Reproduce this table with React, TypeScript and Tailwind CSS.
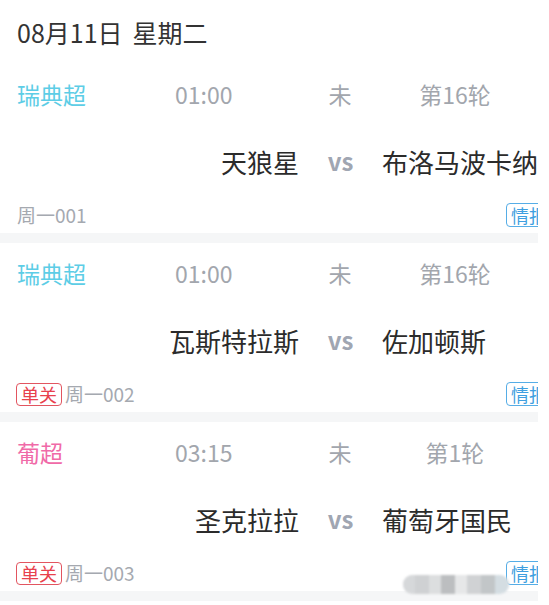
import React from "react";

type Match = {
  league: string;
  leagueColor: string;
  time: string;
  status: string;
  round: string;
  home: string;
  away: string;
  code: string;
  single: boolean;
};

const matches: Match[] = [
  { league: "瑞典超", leagueColor: "text-[#5dcde6]", time: "01:00", status: "未", round: "第16轮", home: "天狼星", away: "布洛马波卡纳", code: "周一001", single: false },
  { league: "瑞典超", leagueColor: "text-[#5dcde6]", time: "01:00", status: "未", round: "第16轮", home: "瓦斯特拉斯", away: "佐加顿斯", code: "周一002", single: true },
  { league: "葡超", leagueColor: "text-[#f06aa8]", time: "03:15", status: "未", round: "第1轮", home: "圣克拉拉", away: "葡萄牙国民", code: "周一003", single: true },
];

function MatchCard({ m }: { m: Match }) {
  return (
    <div>
      <div className="h-[169px] flex flex-col">
        <div className="h-[61px] flex items-center pl-[17px] text-[23px]">
          <div className={`w-[158px] ${m.leagueColor}`}>{m.league}</div>
          <div className="w-[130px] text-[#a2a6ad]">{m.time}</div>
          <div className="w-[70px] text-center text-[#a2a6ad]">{m.status}</div>
          <div className="w-[160px] text-center text-[#a2a6ad]">{m.round}</div>
        </div>
        <div className="h-[72px] flex items-center text-[26px] text-[#2b2b2b]">
          <div className="w-[299px] text-right whitespace-nowrap">{m.home}</div>
          <div className="w-[83px] text-center text-[24px] font-semibold text-[#a0a6b2]">vs</div>
          <div className="flex-1 whitespace-nowrap overflow-hidden">{m.away}</div>
        </div>
        <div className="h-[36px] flex items-center pl-[16px] text-[19px]">
          {m.single && (
            <span className="mr-[2px] px-[4px] h-[23px] leading-[21px] border border-[#e25560] text-[#e8414d] rounded-[4px] text-[18px]">
              单关
            </span>
          )}
          <span className="text-[#a5a9b0] pl-[1px]">{m.code}</span>
          <span className="ml-auto mr-[-14px] px-[4px] h-[24px] leading-[22px] border border-[#56ade6] text-[#3f9fe0] rounded-[4px] text-[18px] whitespace-nowrap">
            情报
          </span>
        </div>
      </div>
      <div className="h-[10px] bg-[#f5f6f7]" />
    </div>
  );
}

export default function App() {
  return (
    <div className="min-h-screen bg-white" style={{ fontFamily: '"Noto Sans CJK SC", "Noto Sans", sans-serif' }}>
      <div className="relative w-[538px] overflow-hidden">
        <div className="h-[64px] flex items-center pl-[17px] pt-[1px] text-[25px] text-[#333]">
          <span>08月11日</span>
          <span className="ml-[10px]">星期二</span>
        </div>
        {matches.map((m) => (
          <MatchCard key={m.code} m={m} />
        ))}
        {/* blurred watermark */}
        <div className="absolute left-[403px] top-[575px] w-[106px] h-[19px] rounded-full bg-[#e4e6e8] overflow-hidden flex blur-[1px]">
          <div className="w-[12px] bg-[#d6d8da]" />
          <div className="w-[14px] bg-[#cfd1d3]" />
          <div className="w-[12px] bg-[#dcdedf]" />
          <div className="w-[14px] bg-[#bcbec0]" />
          <div className="w-[12px] bg-[#e6e7e8]" />
          <div className="w-[14px] bg-[#d0d2d4]" />
          <div className="w-[14px] bg-[#c2c6c8]" />
          <div className="w-[14px] bg-[#d4dde2]" />
        </div>
      </div>
    </div>
  );
}
